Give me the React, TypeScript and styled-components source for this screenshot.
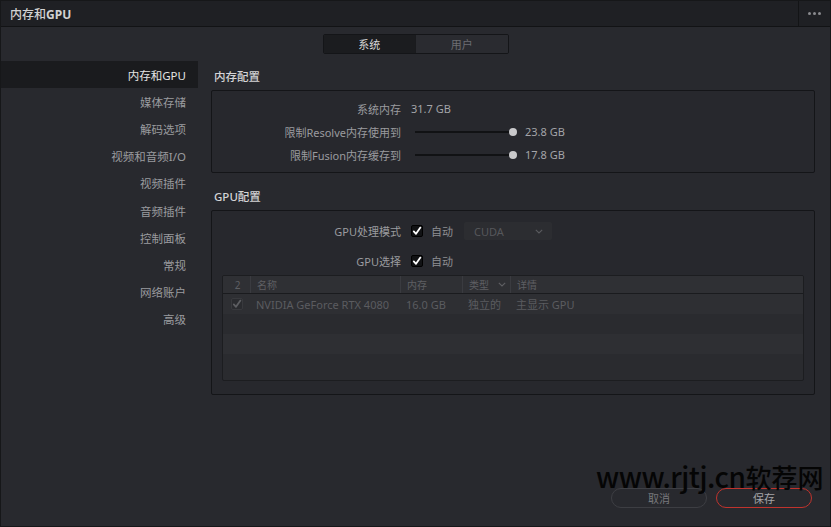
import styled, { createGlobalStyle } from "styled-components";

const GlobalStyle = createGlobalStyle`
  * { box-sizing: border-box; }
  body {
    margin: 0;
    background: #1a1b1e;
    font-family: "Noto Sans", "Noto Sans CJK SC", sans-serif;
  }
`;

const Window = styled.div`
  position: relative;
  width: 831px;
  height: 527px;
  display: flex;
  flex-direction: column;
  background: #28292e;
  border: 1px solid #161719;
  overflow: hidden;
`;

const TitleBar = styled.header`
  height: 26px;
  flex-shrink: 0;
  display: flex;
  align-items: center;
  background: #1f2024;
  border-bottom: 1px solid #121315;
`;

const Title = styled.h1`
  flex: 1;
  margin: 0;
  padding-left: 9px;
  font-size: 12px;
  font-weight: 500;
  color: #d2d2d2;

  b {
    font-weight: 700;
  }
`;

const MenuButton = styled.div`
  width: 32px;
  height: 100%;
  display: flex;
  align-items: center;
  justify-content: center;
  gap: 2px;
  border-left: 1px solid #131416;

  span {
    width: 3px;
    height: 3px;
    border-radius: 50%;
    background: #8a8a8e;
  }
`;

const TabRow = styled.div`
  display: flex;
  justify-content: center;
  padding-top: 7px;
  height: 34px;
`;

const Tabs = styled.div`
  display: flex;
  width: 186px;
  height: 20px;
  border: 1px solid #141518;
  border-radius: 2px;
  overflow: hidden;
`;

const Tab = styled.div<{ $active?: boolean }>`
  flex: 1;
  display: flex;
  align-items: center;
  justify-content: center;
  font-size: 11px;
  color: ${(p) => (p.$active ? "#d8d8d8" : "#6c6d72")};
  background: ${(p) => (p.$active ? "#1b1c1f" : "#2a2b30")};
  & + & {
    border-left: 1px solid #1a1b1e;
  }
`;

const Main = styled.div`
  flex: 1;
  display: flex;
`;

const Sidebar = styled.nav`
  width: 197px;
  flex-shrink: 0;
  display: flex;
  flex-direction: column;
`;

const NavItem = styled.div<{ $active?: boolean }>`
  height: 27.2px;
  display: flex;
  align-items: center;
  justify-content: flex-end;
  padding-right: 12px;
  font-size: 11.5px;
  color: ${(p) => (p.$active ? "#e4e4e4" : "#9a9b9f")};
  background: ${(p) => (p.$active ? "#1a1b1e" : "transparent")};
`;

const Content = styled.section`
  flex: 1;
  margin-left: 13px;
  margin-right: 15px;
  display: flex;
  flex-direction: column;
`;

const SectionTitle = styled.h2<{ $gap?: number }>`
  margin: ${(p) => p.$gap ?? 0}px 0 0 3px;
  height: 29px;
  display: flex;
  align-items: center;
  font-size: 11.5px;
  font-weight: 500;
  color: #d4d4d6;
`;

const Panel = styled.div<{ $height: number }>`
  height: ${(p) => p.$height}px;
  border: 1px solid #141518;
  border-radius: 2px;
  background: #27282d;
  display: flex;
  flex-direction: column;
`;

const MemRows = styled.div`
  padding-top: 6px;
`;

const Row = styled.div<{ $height?: number }>`
  height: ${(p) => p.$height ?? 23}px;
  display: grid;
  grid-template-columns: 189px 1fr;
  column-gap: 10px;
  align-items: center;
`;

const Label = styled.div`
  text-align: right;
  font-size: 11px;
  color: #9a9b9f;
  white-space: nowrap;
`;

const Value = styled.div`
  display: flex;
  align-items: center;
  font-size: 11px;
  color: #a3a4a8;
`;

const Slider = styled.div`
  position: relative;
  width: 102px;
  height: 8px;
  margin-left: 4px;
  margin-right: 8px;
  display: flex;
  align-items: center;

  &::before {
    content: "";
    width: 98px;
    height: 2px;
    background: #111214;
  }
  &::after {
    content: "";
    position: absolute;
    right: 0;
    width: 8px;
    height: 8px;
    border-radius: 50%;
    background: #c9c9cb;
  }
`;

const GpuRows = styled.div`
  padding-top: 9px;
  display: flex;
  flex-direction: column;
  gap: 8px;
`;

const Check = styled.span<{ $dim?: boolean }>`
  width: 12px;
  height: 12px;
  border-radius: 2px;
  flex-shrink: 0;
  display: inline-flex;
  align-items: center;
  justify-content: center;
  background: ${(p) => (p.$dim ? "#2a2b2f" : "#111214")};
  border: 1px solid ${(p) => (p.$dim ? "#38393d" : "#000")};

  svg {
    width: 10px;
    height: 10px;
  }
`;

const AutoText = styled.span`
  margin-left: 8px;
  font-size: 11px;
  color: #8d8e92;
`;

const Dropdown = styled.div`
  margin-left: 11px;
  width: 88px;
  height: 18px;
  display: flex;
  align-items: center;
  justify-content: space-between;
  padding: 0 9px 0 10px;
  background: #2c2d31;
  border-radius: 2px;
  font-size: 11px;
  color: #56575b;
`;

const Table = styled.div`
  margin: 3px 10px 0 10px;
  height: 106px;
  border: 1px solid #1c1d20;
  border-radius: 2px;
  background: #2a2b2f;
  overflow: hidden;
`;

const cols = "27px 150px 62px 48px 1fr";

const HeadRow = styled.div`
  display: grid;
  grid-template-columns: ${cols};
  height: 18px;
  background: #2f3034;
  border-bottom: 1px solid #1a1b1e;
`;

const HeadCell = styled.div<{ $center?: boolean }>`
  display: flex;
  align-items: center;
  justify-content: ${(p) => (p.$center ? "center" : "space-between")};
  padding: 0 4px 0 6px;
  font-size: 10px;
  color: #5e5f63;
  & + & {
    border-left: 1px solid #3a3b40;
  }
`;

const BodyRow = styled.div<{ $odd?: boolean }>`
  display: grid;
  grid-template-columns: ${cols};
  height: 20px;
  align-items: center;
  background: ${(p) => (p.$odd ? "#2e2f33" : "#2a2b2f")};
`;

const Cell = styled.div<{ $center?: boolean }>`
  display: flex;
  align-items: center;
  justify-content: ${(p) => (p.$center ? "center" : "flex-start")};
  padding-left: ${(p) => (p.$center ? 0 : 6)}px;
  font-size: 11px;
  color: #5b5c60;
  white-space: nowrap;
`;

const Footer = styled.footer`
  display: flex;
  justify-content: flex-end;
  gap: 9px;
  padding: 0 18px 18px 0;
`;

const Button = styled.button<{ $primary?: boolean }>`
  width: 96px;
  height: 20px;
  border-radius: 10px;
  background: transparent;
  border: 1px solid ${(p) => (p.$primary ? "#c0332d" : "#3d3e43")};
  color: ${(p) => (p.$primary ? "#a5a5a8" : "#77787c")};
  font-family: inherit;
  font-size: 11px;
  padding: 0;
`;

const Watermark = styled.div`
  position: absolute;
  left: 595px;
  top: 455px;
  display: flex;
  align-items: baseline;
  font-family: "Noto Sans CJK SC", sans-serif;
  font-size: 28px;
  font-weight: 500;
  letter-spacing: -0.5px;
  color: #050505;
  white-space: nowrap;
  pointer-events: none;

  span {
    font-size: 26px;
    letter-spacing: 0;
  }
`;

const CheckMark = ({ color = "#fff" }: { color?: string }) => (
  <svg viewBox="0 0 10 10">
    <path d="M1.8 5.4 L4 7.8 L8.4 1.6" fill="none" stroke={color} strokeWidth="1.8" strokeLinecap="round" strokeLinejoin="round" />
  </svg>
);

const Chevron = ({ color }: { color: string }) => (
  <svg width="8" height="5" viewBox="0 0 8 5">
    <path d="M0.8 0.8 L4 4 L7.2 0.8" fill="none" stroke={color} strokeWidth="1.1" />
  </svg>
);

const navItems = ["内存和GPU", "媒体存储", "解码选项", "视频和音频I/O", "视频插件", "音频插件", "控制面板", "常规", "网络账户", "高级"];

export default function App() {
  return (
    <>
      <GlobalStyle />
      <Window>
        <TitleBar>
          <Title>
            内存和<b>GPU</b>
          </Title>
          <MenuButton>
            <span />
            <span />
            <span />
          </MenuButton>
        </TitleBar>

        <TabRow>
          <Tabs>
            <Tab $active>系统</Tab>
            <Tab>用户</Tab>
          </Tabs>
        </TabRow>

        <Main>
          <Sidebar>
            {navItems.map((item, i) => (
              <NavItem key={item} $active={i === 0}>
                {item}
              </NavItem>
            ))}
          </Sidebar>

          <Content>
            <SectionTitle>内存配置</SectionTitle>
            <Panel $height={83}>
              <MemRows>
                <Row>
                  <Label>系统内存</Label>
                  <Value>31.7 GB</Value>
                </Row>
                <Row>
                  <Label>限制Resolve内存使用到</Label>
                  <Value>
                    <Slider />
                    23.8 GB
                  </Value>
                </Row>
                <Row>
                  <Label>限制Fusion内存缓存到</Label>
                  <Value>
                    <Slider />
                    17.8 GB
                  </Value>
                </Row>
              </MemRows>
            </Panel>

            <SectionTitle $gap={8}>GPU配置</SectionTitle>
            <Panel $height={185}>
              <GpuRows>
                <Row $height={22}>
                  <Label>GPU处理模式</Label>
                  <Value>
                    <Check>
                      <CheckMark />
                    </Check>
                    <AutoText>自动</AutoText>
                    <Dropdown>
                      CUDA
                      <Chevron color="#5a5b5f" />
                    </Dropdown>
                  </Value>
                </Row>
                <Row $height={22}>
                  <Label>GPU选择</Label>
                  <Value>
                    <Check>
                      <CheckMark />
                    </Check>
                    <AutoText>自动</AutoText>
                  </Value>
                </Row>
              </GpuRows>

              <Table>
                <HeadRow>
                  <HeadCell $center>2</HeadCell>
                  <HeadCell>名称</HeadCell>
                  <HeadCell>内存</HeadCell>
                  <HeadCell>
                    类型
                    <Chevron color="#5e5f63" />
                  </HeadCell>
                  <HeadCell>详情</HeadCell>
                </HeadRow>
                <BodyRow $odd>
                  <Cell $center>
                    <Check $dim>
                      <CheckMark color="#5d5e62" />
                    </Check>
                  </Cell>
                  <Cell>NVIDIA GeForce RTX 4080</Cell>
                  <Cell>16.0 GB</Cell>
                  <Cell>独立的</Cell>
                  <Cell>主显示 GPU</Cell>
                </BodyRow>
                <BodyRow />
                <BodyRow $odd />
                <BodyRow />
              </Table>
            </Panel>
          </Content>
        </Main>

        <Footer>
          <Button>取消</Button>
          <Button $primary>保存</Button>
        </Footer>

        <Watermark>
          www.rjtj.cn<span>软荐网</span>
        </Watermark>
      </Window>
    </>
  );
}
